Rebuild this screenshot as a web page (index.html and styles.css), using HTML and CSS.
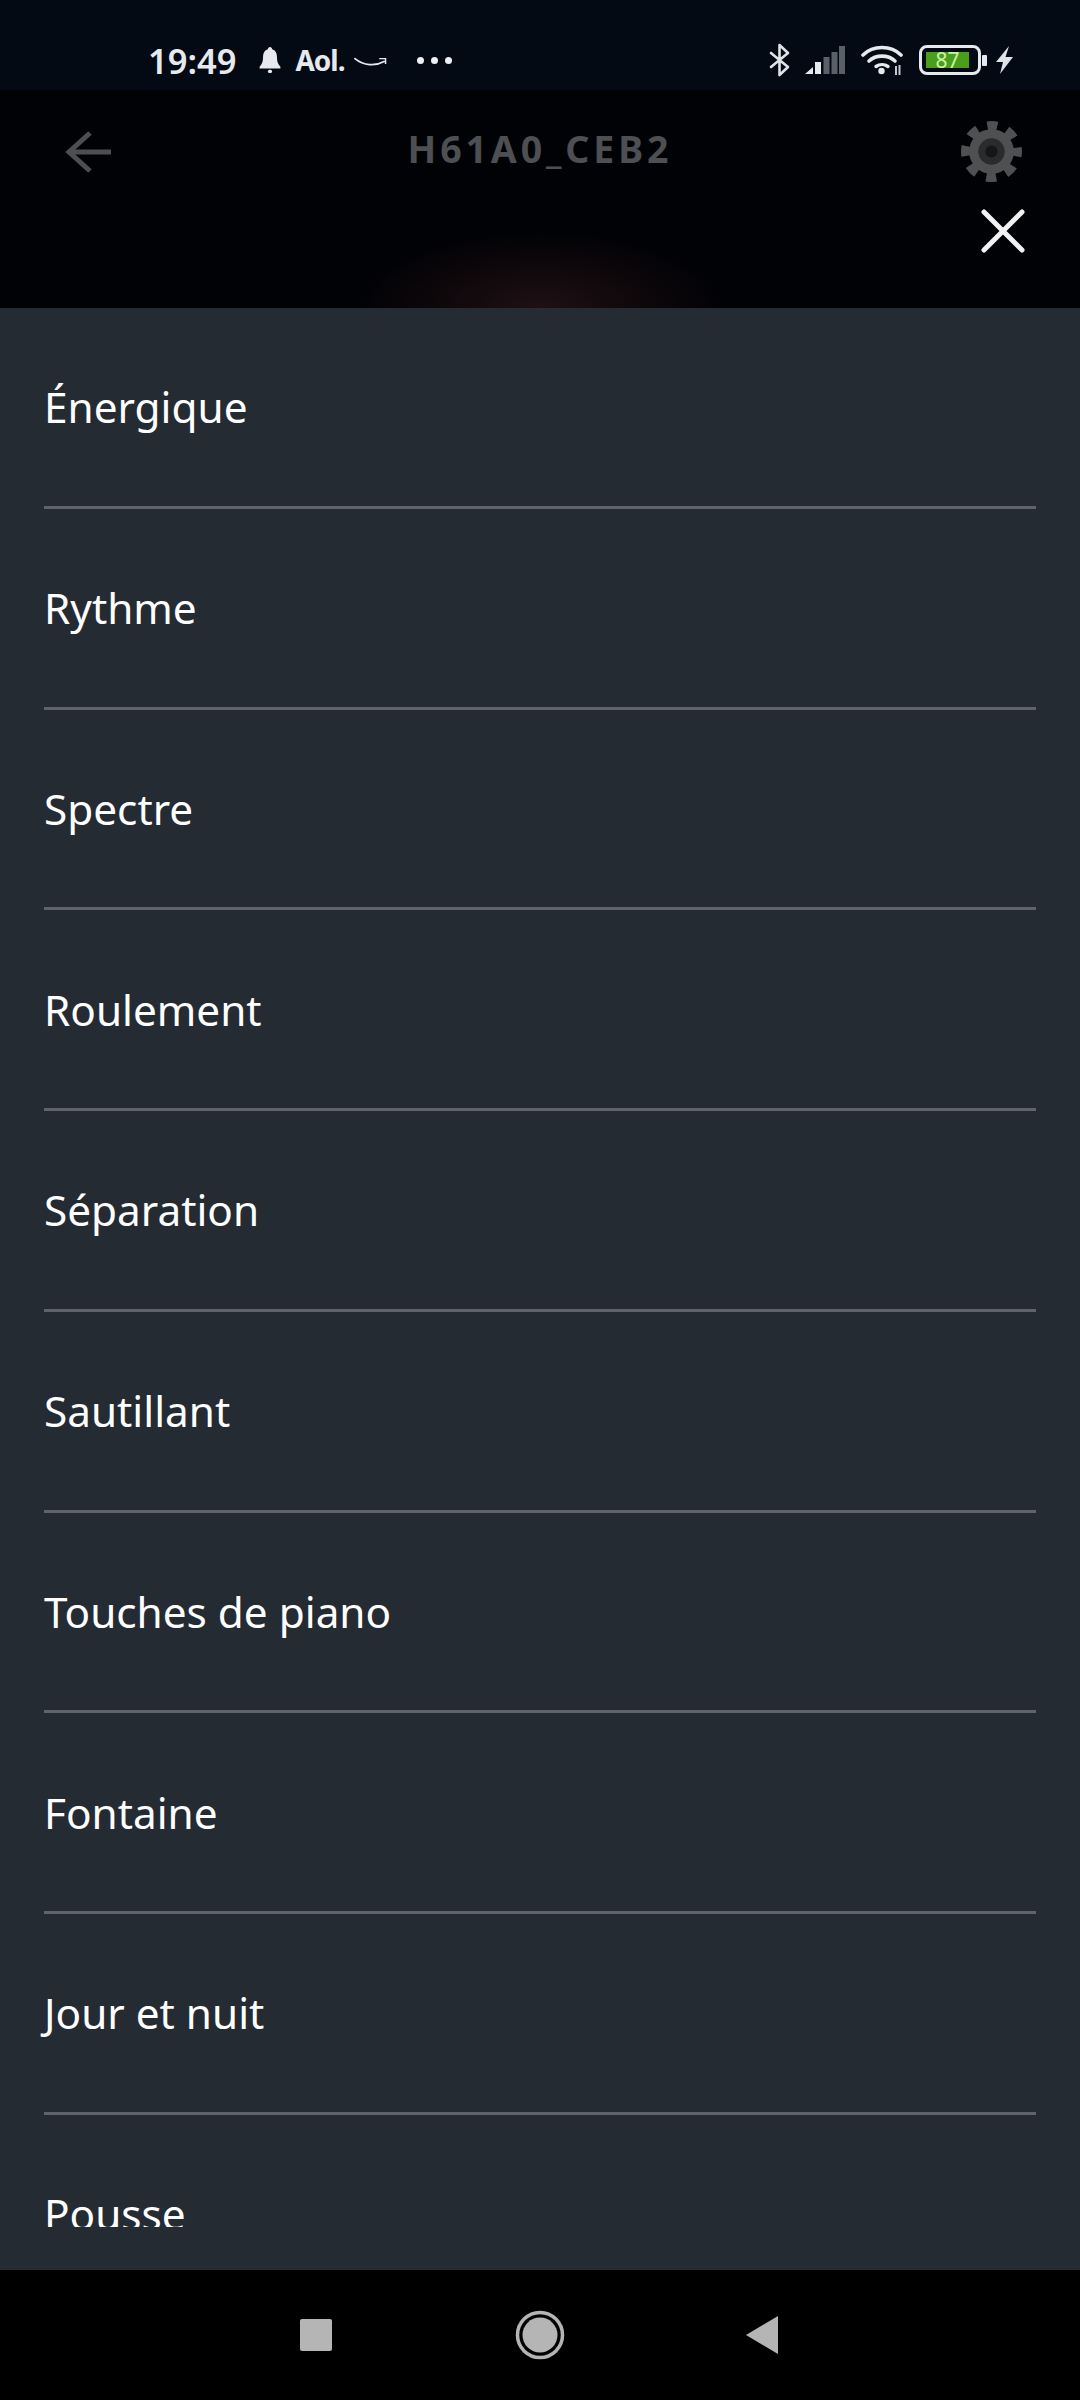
FILE: index.html
```html
<!DOCTYPE html>
<html lang="fr">
<head>
    <meta charset="UTF-8">
    <meta name="viewport" content="width=device-width, initial-scale=1.0">
    <title>H61A0_CEB2</title>
    <link rel="stylesheet" href="styles.css">
</head>
<body>
    <div class="phone">
        <div class="status-bar">
            <div class="status-left">
                <span class="time">19:49</span>
                <svg class="bell" width="22" height="27" viewBox="0 0 21 26">
                    <path d="M10.500 0c1.200 0 2 .9 2.100 2.200 3.200 1 4.600 3.800 4.600 7.300 0 4 .6 7 3.300 9.500v1.600H.5V19c2.700-2.500 3.300-5.500 3.300-9.500 0-3.500 1.400-6.300 4.600-7.300C8.500.9 9.300 0 10.500 0z" fill="#e6e9ee"/>
                    <rect x="8.500" y="22" width="4" height="3" rx="1.500" fill="#e6e9ee"/>
                </svg>
                <span class="aol">Aol.</span>
                <svg class="smile" width="33" height="12" viewBox="0 0 34 12">
                    <path d="M1 2.500C10 10 22 10.500 31 5.500" fill="none" stroke="#e6e9ee" stroke-width="1.800" stroke-linecap="round"/>
                    <path d="M26 2.500h6.500V8" fill="none" stroke="#e6e9ee" stroke-width="1.500"/>
                </svg>
                <div class="dots"><i></i><i></i><i></i></div>
            </div>
            <div class="status-right">
                <svg class="bluetooth" width="22" height="34" viewBox="0 0 22 34">
                    <path d="M2 10l17 14-8.500 8V2L19 10 2 24" fill="none" stroke="#dfe3e8" stroke-width="2.600" stroke-linejoin="round" stroke-linecap="round"/>
                </svg>
                <svg class="signal" width="42" height="30" viewBox="0 0 40 30">
                    <path d="M0 29l8-7v7z" fill="#e6e9ee"/>
                    <rect x="10" y="17" width="6" height="12" fill="#e6e9ee"/>
                    <rect x="18.500" y="12" width="6" height="17" fill="#5a6068"/>
                    <rect x="26.500" y="7" width="6" height="22" fill="#5a6068"/>
                    <rect x="34" y="1" width="6" height="28" fill="#5a6068"/>
                </svg>
                <svg class="wifi" width="42" height="32" viewBox="0 0 42 32">
                    <path d="M2 11C12 1 30 1 40 11" fill="none" stroke="#e6e9ee" stroke-width="3.600" stroke-linecap="round"/>
                    <path d="M8 17c7-6.500 19-6.500 26 0" fill="none" stroke="#e6e9ee" stroke-width="3.600" stroke-linecap="round"/>
                    <path d="M15 22.500c3.500-2.500 8.500-2.500 12 0" fill="none" stroke="#e6e9ee" stroke-width="3.400" stroke-linecap="round"/>
                    <circle cx="20.500" cy="27" r="3.200" fill="#e6e9ee"/>
                    <path d="M35 22v9M38.500 21v10" stroke="#c4c8ce" stroke-width="2"/>
                </svg>
                <div class="battery">
                    <div class="battery-body"><span class="battery-level">87</span></div>
                    <div class="battery-nub"></div>
                </div>
                <svg class="bolt" width="19" height="28" viewBox="0 0 19 28">
                    <path d="M14 0L1 16h7l-3 12 13-17h-7.500z" fill="#dfe3e8"/>
                </svg>
            </div>
        </div>

        <div class="header">
            <div class="header-top">
                <svg class="back" width="46" height="44" viewBox="0 0 46 44">
                    <path d="M25 3L4 22l21 19M4 22h42" fill="none" stroke="#4d4e50" stroke-width="5"/>
                </svg>
                <h1 class="title">H61A0_CEB2</h1>
                <svg class="gear" width="61" height="61" viewBox="0 0 60 60">
                    <circle cx="30" cy="30" r="25.500" fill="none" stroke="#4f5052" stroke-width="9" stroke-dasharray="10 10.030" stroke-dashoffset="5"/>
                    <circle cx="30" cy="30" r="22" fill="#4f5052"/>
                    <circle cx="30" cy="30" r="13" fill="#2a2b2d"/>
                    <circle cx="30" cy="30" r="6" fill="#151618"/>
                </svg>
            </div>
            <div class="header-close">
                <svg width="44" height="44" viewBox="0 0 44 44">
                    <path d="M3 3l38 38M41 3L3 41" fill="none" stroke="#f2f2f2" stroke-width="5" stroke-linecap="round"/>
                </svg>
            </div>
        </div>

        <div class="sheet">
            <ul class="effects">
                <li class="effect"><span>Énergique</span></li>
                <li class="effect"><span>Rythme</span></li>
                <li class="effect"><span>Spectre</span></li>
                <li class="effect"><span>Roulement</span></li>
                <li class="effect"><span>Séparation</span></li>
                <li class="effect"><span>Sautillant</span></li>
                <li class="effect"><span>Touches de piano</span></li>
                <li class="effect"><span>Fontaine</span></li>
                <li class="effect"><span>Jour et nuit</span></li>
                <li class="effect"><span>Pousse</span></li>
            </ul>
        </div>

        <div class="nav-bar">
            <div class="nav-square"></div>
            <svg width="50" height="50" viewBox="0 0 50 50">
                <circle cx="25" cy="25" r="22.500" fill="none" stroke="#b5b5b5" stroke-width="3.500"/>
                <circle cx="25" cy="25" r="17.500" fill="#b5b5b5"/>
            </svg>
            <svg class="nav-back" width="32" height="38" viewBox="0 0 32 38">
                <path d="M32 0v38L0 19z" fill="#b5b5b5"/>
            </svg>
        </div>
    </div>
</body>
</html>
```

FILE: styles.css
```css
body {
    margin: 0px;
    background-color: black;
    font-family: 'Noto Sans', 'Open Sans', sans-serif;
}
.phone {
    width: 1080px;
    height: 2400px;
    display: flex;
    flex-flow: column nowrap;
    overflow: hidden;
}
.status-bar {
    height: 90px;
    flex: none;
    box-sizing: border-box;
    display: flex;
    justify-content: space-between;
    align-items: center;
    padding: 30px 66px 0px 148px;
    background-color: #030a13;
    color: #e6e9ee;
}
.status-left, .status-right {
    display: flex;
    align-items: center;
}
.time {
    font-size: 34.5px;
    font-weight: 600;
    margin-right: 23px;
}
.aol {
    font-size: 28px;
    font-weight: 700;
    margin-left: 14px;
    letter-spacing: -1px;
}
.smile {
    margin: 4px 0px 0px 9px;
}
.dots {
    display: flex;
    gap: 7px;
    margin-left: 30px;
}
.dots i {
    width: 7px;
    height: 7px;
    border-radius: 50%;
    background-color: #eef0f3;
}
.signal {
    margin-left: 13px;
}
.wifi {
    margin-left: 15px;
}
.battery {
    display: flex;
    align-items: center;
    gap: 1px;
    margin-left: 16px;
}
.battery-body {
    width: 62px;
    height: 30px;
    box-sizing: border-box;
    border: 3px solid #e6e9ee;
    border-radius: 8px;
    padding: 4px 9px 4px 4px;
    display: flex;
}
.battery-level {
    flex: 1;
    background-color: #4a9e1c;
    color: #c9f5a6;
    font-size: 21px;
    line-height: 16px;
    text-align: center;
}
.battery-nub {
    width: 5px;
    height: 11px;
    border-radius: 1px;
    background-color: #e6e9ee;
}
.bolt {
    margin-left: 8px;
}
.header {
    height: 218px;
    flex: none;
    box-sizing: border-box;
    padding: 31px 55px 0px 55px;
    background: radial-gradient(185px 78px at 50% 100%, #1f1015, #0b0609 65%, #010206 100%);
}
.header-top {
    display: grid;
    grid-template-columns: 1fr auto 1fr;
    align-items: center;
}
.back {
    margin-left: 10px;
}
.title {
    margin: 0px 0px 6px 0px;
    color: #4d4f52;
    font-size: 37.5px;
    font-weight: 700;
    letter-spacing: 3.9px;
    line-height: 50px;
}
.gear {
    justify-self: end;
    margin-right: 3px;
}
.header-close {
    display: flex;
    justify-content: flex-end;
    margin-top: 27px;
}
.sheet {
    flex: none;
    height: 1962px;
    box-sizing: border-box;
    padding-bottom: 43px;
    background-color: #252b33;
}
.effects {
    list-style: none;
    margin: 0px;
    padding: 0px;
    height: 100%;
    overflow: hidden;
}
.effect {
    height: 200.75px;
    box-sizing: border-box;
    margin: 0px 44px;
    display: flex;
    align-items: center;
    border-bottom: 3px solid #5f636b;
    color: white;
    font-size: 42.3px;
}
.nav-bar {
    flex: 1;
    display: flex;
    align-items: center;
    background-color: black;
    padding-left: 300px;
    gap: 183px;
}
.nav-square {
    width: 32px;
    height: 32px;
    border-radius: 2px;
    background-color: #b5b5b5;
}
.nav-back {
    margin-left: -2px;
}
```
